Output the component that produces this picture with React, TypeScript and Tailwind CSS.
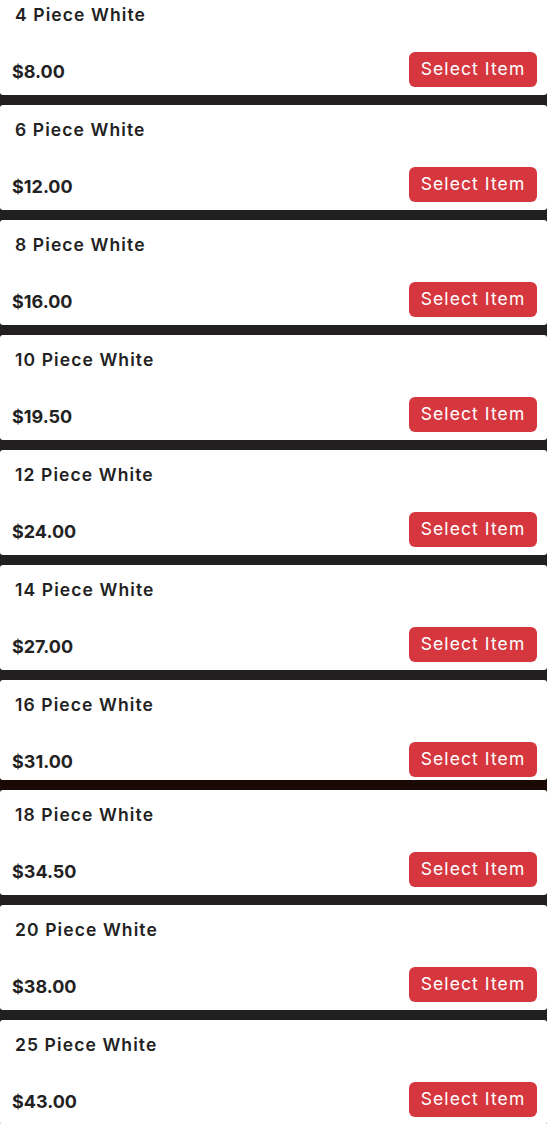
import React from "react";

type Item = { name: string; price: string };

const items: Item[] = [
  { name: "4 Piece White", price: "$8.00" },
  { name: "6 Piece White", price: "$12.00" },
  { name: "8 Piece White", price: "$16.00" },
  { name: "10 Piece White", price: "$19.50" },
  { name: "12 Piece White", price: "$24.00" },
  { name: "14 Piece White", price: "$27.00" },
  { name: "16 Piece White", price: "$31.00" },
  { name: "18 Piece White", price: "$34.50" },
  { name: "20 Piece White", price: "$38.00" },
  { name: "25 Piece White", price: "$43.00" },
];

function ItemCard({ item, short }: { item: Item; short?: boolean }) {
  return (
    <div className={`bg-white rounded-[3px] flex flex-col ${short ? "h-[100px]" : "h-[105px]"}`}>
      <div className="h-[50px] flex items-center pl-[15px] text-[17.5px] font-semibold text-[#222] tracking-[1.1px]">
        {item.name}
      </div>
      <div className="flex items-center justify-between pl-[12px] pr-[10px] mt-[12px]">
        <span className="text-[18px] font-bold text-[#222] pt-[3px]">{item.price}</span>
        <button className="h-[35px] w-[128px] rounded-[6px] bg-[#d6373f] text-white text-[17.5px] tracking-[1.1px]">
          Select Item
        </button>
      </div>
    </div>
  );
}

export default function App() {
  return (
    <div className="w-[547px] h-[1124px] overflow-hidden bg-[#211f20] font-['Inter',sans-serif]">
      <div className="-mt-[10px] flex flex-col">
        {items.map((item, i) => (
          <div key={item.name} className="flex flex-col">
            <ItemCard item={item} short={i === 6} />
            {i < items.length - 1 && (
              <div className={i === 6 ? "h-[10px] bg-[#1a0904]" : "h-[10px] bg-[#211f20]"} />
            )}
          </div>
        ))}
      </div>
    </div>
  );
}
